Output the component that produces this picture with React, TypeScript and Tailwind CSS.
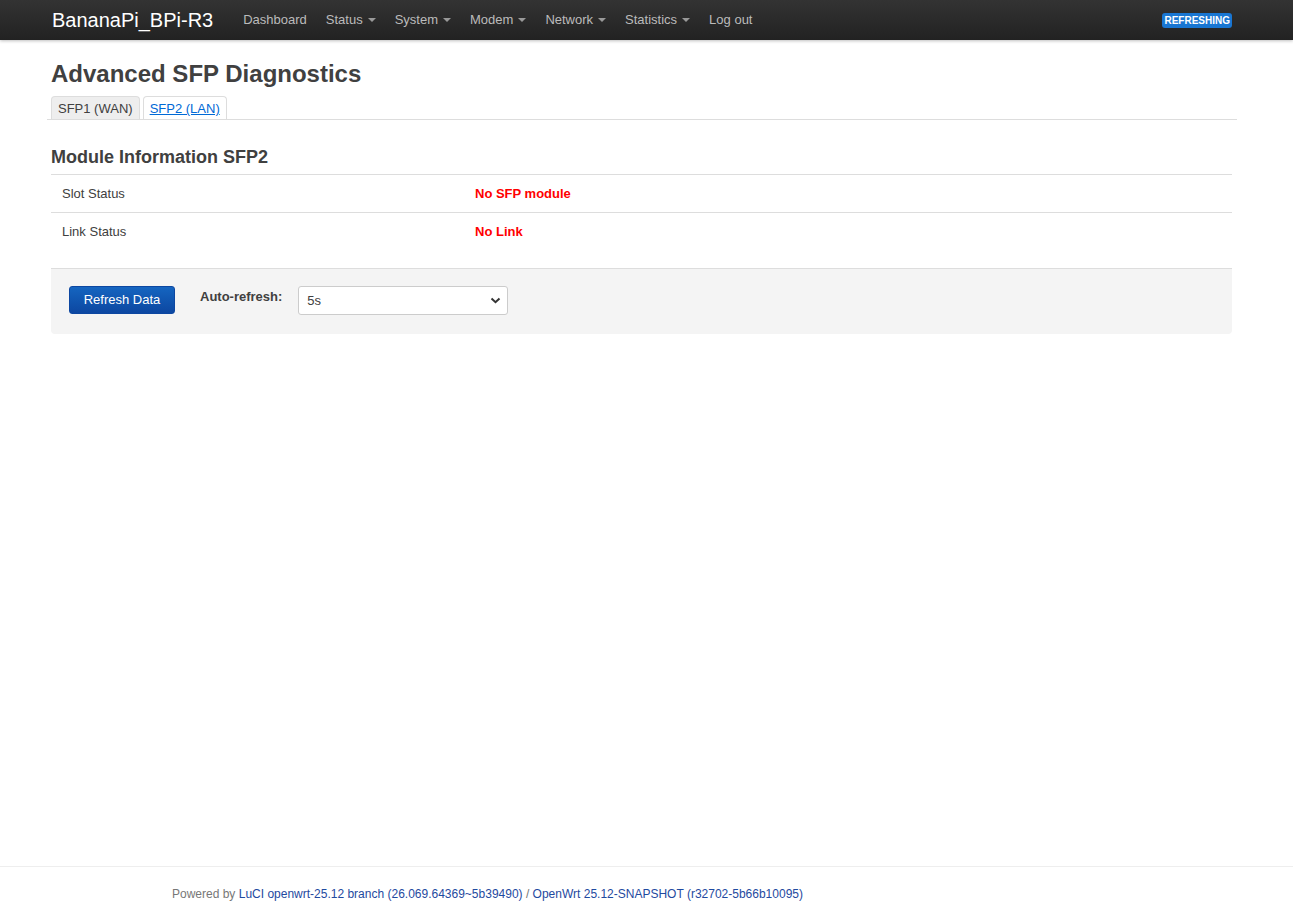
import React, {useState} from "react";

const navItems = [
    {label: "Dashboard", caret: false},
    {label: "Status", caret: true},
    {label: "System", caret: true},
    {label: "Modem", caret: true},
    {label: "Network", caret: true},
    {label: "Statistics", caret: true},
    {label: "Log out", caret: false},
]

const Caret = () => (
    <span className="ml-[5px] inline-block w-0 h-0 border-x-[4px] border-x-transparent border-t-[4px] border-t-[#999] align-middle"/>
)

const App = () => {
    const [tab, setTab] = useState(1)
    const [interval, setInterval] = useState('5')

    return (
        <div className="min-h-screen flex flex-col bg-white text-[#404040] font-['Liberation_Sans',Arial,sans-serif]">
            <header className="h-10 bg-gradient-to-b from-[#333] to-[#222] shadow-[0_1px_3px_rgba(0,0,0,0.25)]">
                <div className="h-full flex items-center pl-[52px] pr-[61px]">
                    <a className="text-white text-[20px] leading-none mr-[30px]">BananaPi_BPi-R3</a>
                    <nav className="flex items-center gap-[19px] text-[13px] text-[#bbb]">
                        {navItems.map((item) => (
                            <a key={item.label} className="flex items-center cursor-pointer hover:text-white">
                                {item.label}
                                {item.caret && <Caret/>}
                            </a>
                        ))}
                    </nav>
                    <span className="ml-auto bg-[#1976d2] text-white text-[10px] font-bold px-[2px] h-[15px] leading-[15px] rounded-[3px]">
                        REFRESHING
                    </span>
                </div>
            </header>

            <main className="flex-1 pl-[51px] pr-[56px] pt-[19px]">
                <h2 className="text-[24px] font-bold leading-[30px] text-[#404040]">Advanced SFP Diagnostics</h2>

                <ul className="flex items-end gap-[3px] mt-[7px] -ml-[4px] pl-[4px] border-b border-[#ddd] text-[13px]">
                    <li
                        onClick={() => setTab(0)}
                        className={tab === 0
                            ? "px-[6px] h-[23px] leading-[23px] border border-b-0 border-[#ddd] rounded-t-[4px] bg-white text-[#0069d6] underline cursor-pointer"
                            : "px-[6px] h-[23px] leading-[23px] border border-b-0 border-[#ddd] rounded-t-[4px] bg-[#eee] text-[#404040] cursor-pointer"}
                    >SFP1 (WAN)
                    </li>
                    <li
                        onClick={() => setTab(1)}
                        className={tab === 1
                            ? "px-[6px] h-[23px] leading-[23px] border border-b-0 border-[#ddd] rounded-t-[4px] bg-white text-[#0069d6] underline cursor-pointer"
                            : "px-[6px] h-[23px] leading-[23px] border border-b-0 border-[#ddd] rounded-t-[4px] bg-[#eee] text-[#404040] cursor-pointer"}
                    >SFP2 (LAN)
                    </li>
                </ul>

                <h3 className="mt-[27px] text-[18px] font-bold leading-[20px] text-[#404040]">
                    Module Information SFP{tab + 1}
                </h3>

                <div className="mt-[7px] mr-[5px] text-[13px]">
                    <div className="grid grid-cols-[424px_1fr] items-center h-[38px] border-t border-[#ddd]">
                        <span className="pl-[11px]">Slot Status</span>
                        <span className="text-[#f00] font-bold">No SFP module</span>
                    </div>
                    <div className="grid grid-cols-[424px_1fr] items-center h-[38px] border-t border-[#ddd]">
                        <span className="pl-[11px]">Link Status</span>
                        <span className="text-[#f00] font-bold">No Link</span>
                    </div>
                </div>

                <div className="mt-[18px] mr-[5px] h-[66px] bg-[#f4f4f4] border-t border-[#ddd] rounded-b-[4px] flex items-start pt-[17px] pl-[18px] gap-[25px]">
                    <button className="h-[28px] w-[106px] rounded-[3px] border border-[#0d47a1] bg-gradient-to-b from-[#1565c0] to-[#0d47a1] text-white text-[13px]">
                        Refresh Data
                    </button>
                    <label className="text-[13px] font-bold text-[#404040] pt-[1px]">Auto-refresh:</label>
                    <div className="relative ml-[-9px]">
                        <select
                            value={interval}
                            onChange={(e) => setInterval(e.target.value)}
                            className="appearance-none w-[210px] h-[29px] pl-[8px] pr-[28px] text-[13px] text-[#404040] bg-white border border-[#ccc] rounded-[3px] outline-none"
                        >
                            <option value="0">Off</option>
                            <option value="5">5s</option>
                            <option value="10">10s</option>
                            <option value="30">30s</option>
                        </select>
                        <svg className="absolute right-[7px] top-[11px] pointer-events-none" width="11" height="7" viewBox="0 0 11 7">
                            <path d="M1.5 1.5 L5.5 5.2 L9.5 1.5" fill="none" stroke="#333" strokeWidth="2"/>
                        </svg>
                    </div>
                </div>
            </main>

            <footer className="h-[53px] border-t border-[#eee] pl-[172px] pt-[18px] text-[12px] text-[#777]">
                Powered by <a className="text-[#1f4aa0]">LuCI openwrt-25.12 branch (26.069.64369~5b39490)</a>
                {" / "}
                <a className="text-[#1f4aa0]">OpenWrt 25.12-SNAPSHOT (r32702-5b66b10095)</a>
            </footer>
        </div>
    )
}

export default App
